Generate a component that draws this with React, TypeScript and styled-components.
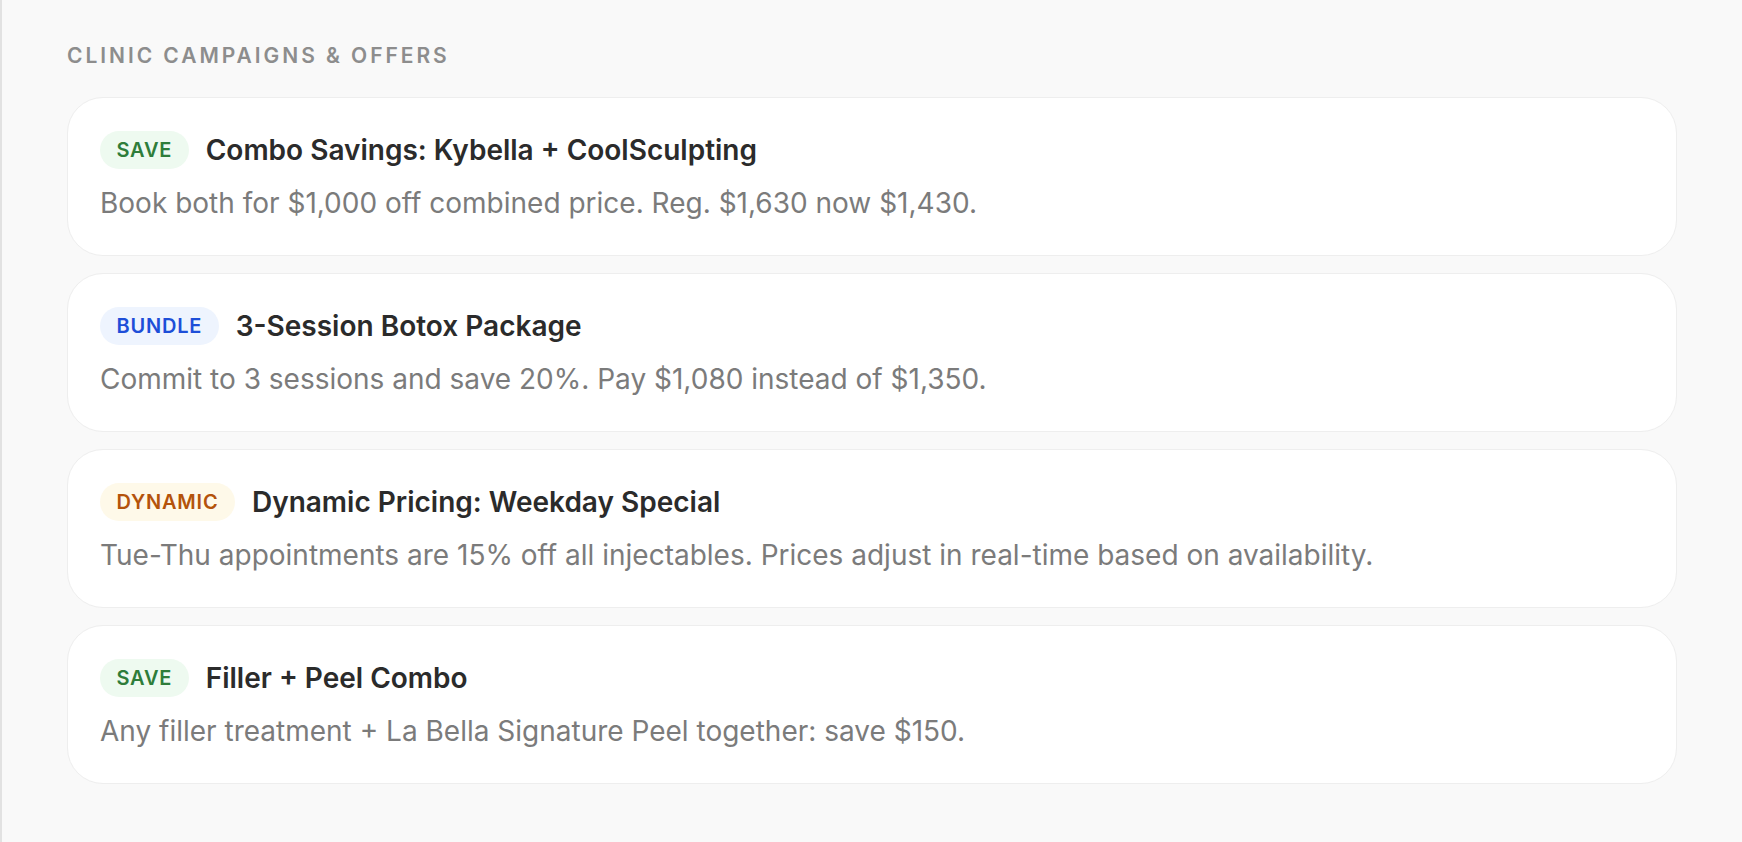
import React from "react";
import styled, { createGlobalStyle } from "styled-components";

const GlobalStyle = createGlobalStyle`
  html, body {
    margin: 0;
    padding: 0;
    background: #f9f9f9;
    font-family: Inter, "Noto Sans", "Liberation Sans", sans-serif;
  }
  * { box-sizing: border-box; }
`;

const Page = styled.div`
  min-height: 842px;
  border-left: 2px solid #e2e2e2;
  background: #f9f9f9;
  padding: 41px 65px 40px 65px;
`;

const Heading = styled.h2`
  margin: 0 0 27px 0;
  font-size: 21px;
  line-height: 1.4;
  font-weight: 600;
  letter-spacing: 2.95px;
  color: #8d8d8d;
  text-transform: uppercase;
`;

const List = styled.div`
  display: flex;
  flex-direction: column;
  gap: 17.5px;
`;

const Card = styled.div`
  background: #ffffff;
  border: 1.5px solid #eeeeee;
  border-radius: 36px;
  padding: 33px 32px 32px 32px;
  display: flex;
  flex-direction: column;
  gap: 15px;
`;

const TitleRow = styled.div`
  display: flex;
  align-items: center;
  gap: 17px;
`;

type Tone = "save" | "bundle" | "dynamic";

const toneColors: Record<Tone, { fg: string; bg: string }> = {
  save: { fg: "#2e7d3a", bg: "#eefaf0" },
  bundle: { fg: "#1d4ed8", bg: "#eef4fe" },
  dynamic: { fg: "#b4530b", bg: "#fef9e9" },
};

const Badge = styled.span<{ $tone: Tone }>`
  display: inline-flex;
  align-items: center;
  height: 38px;
  padding: 0 16.5px;
  border-radius: 19px;
  font-size: 20px;
  font-weight: 600;
  letter-spacing: 0.8px;
  color: ${(p) => toneColors[p.$tone].fg};
  background: ${(p) => toneColors[p.$tone].bg};
`;

const Title = styled.span`
  font-size: 28px;
  font-weight: 600;
  color: #2b2b2b;
  line-height: 1.25;
`;

const Description = styled.p`
  margin: 0;
  font-size: 28px;
  line-height: 38.5px;
  color: #7b7b7b;
  font-weight: 400;
`;

const offers: { tone: Tone; label: string; title: string; desc: string }[] = [
  {
    tone: "save",
    label: "SAVE",
    title: "Combo Savings: Kybella + CoolSculpting",
    desc: "Book both for $1,000 off combined price. Reg. $1,630 now $1,430.",
  },
  {
    tone: "bundle",
    label: "BUNDLE",
    title: "3-Session Botox Package",
    desc: "Commit to 3 sessions and save 20%. Pay $1,080 instead of $1,350.",
  },
  {
    tone: "dynamic",
    label: "DYNAMIC",
    title: "Dynamic Pricing: Weekday Special",
    desc: "Tue-Thu appointments are 15% off all injectables. Prices adjust in real-time based on availability.",
  },
  {
    tone: "save",
    label: "SAVE",
    title: "Filler + Peel Combo",
    desc: "Any filler treatment + La Bella Signature Peel together: save $150.",
  },
];

export default function App() {
  return (
    <>
      <GlobalStyle />
      <Page>
        <Heading>Clinic Campaigns &amp; Offers</Heading>
        <List>
          {offers.map((o, i) => (
            <Card key={i}>
              <TitleRow>
                <Badge $tone={o.tone}>{o.label}</Badge>
                <Title>{o.title}</Title>
              </TitleRow>
              <Description>{o.desc}</Description>
            </Card>
          ))}
        </List>
      </Page>
    </>
  );
}
